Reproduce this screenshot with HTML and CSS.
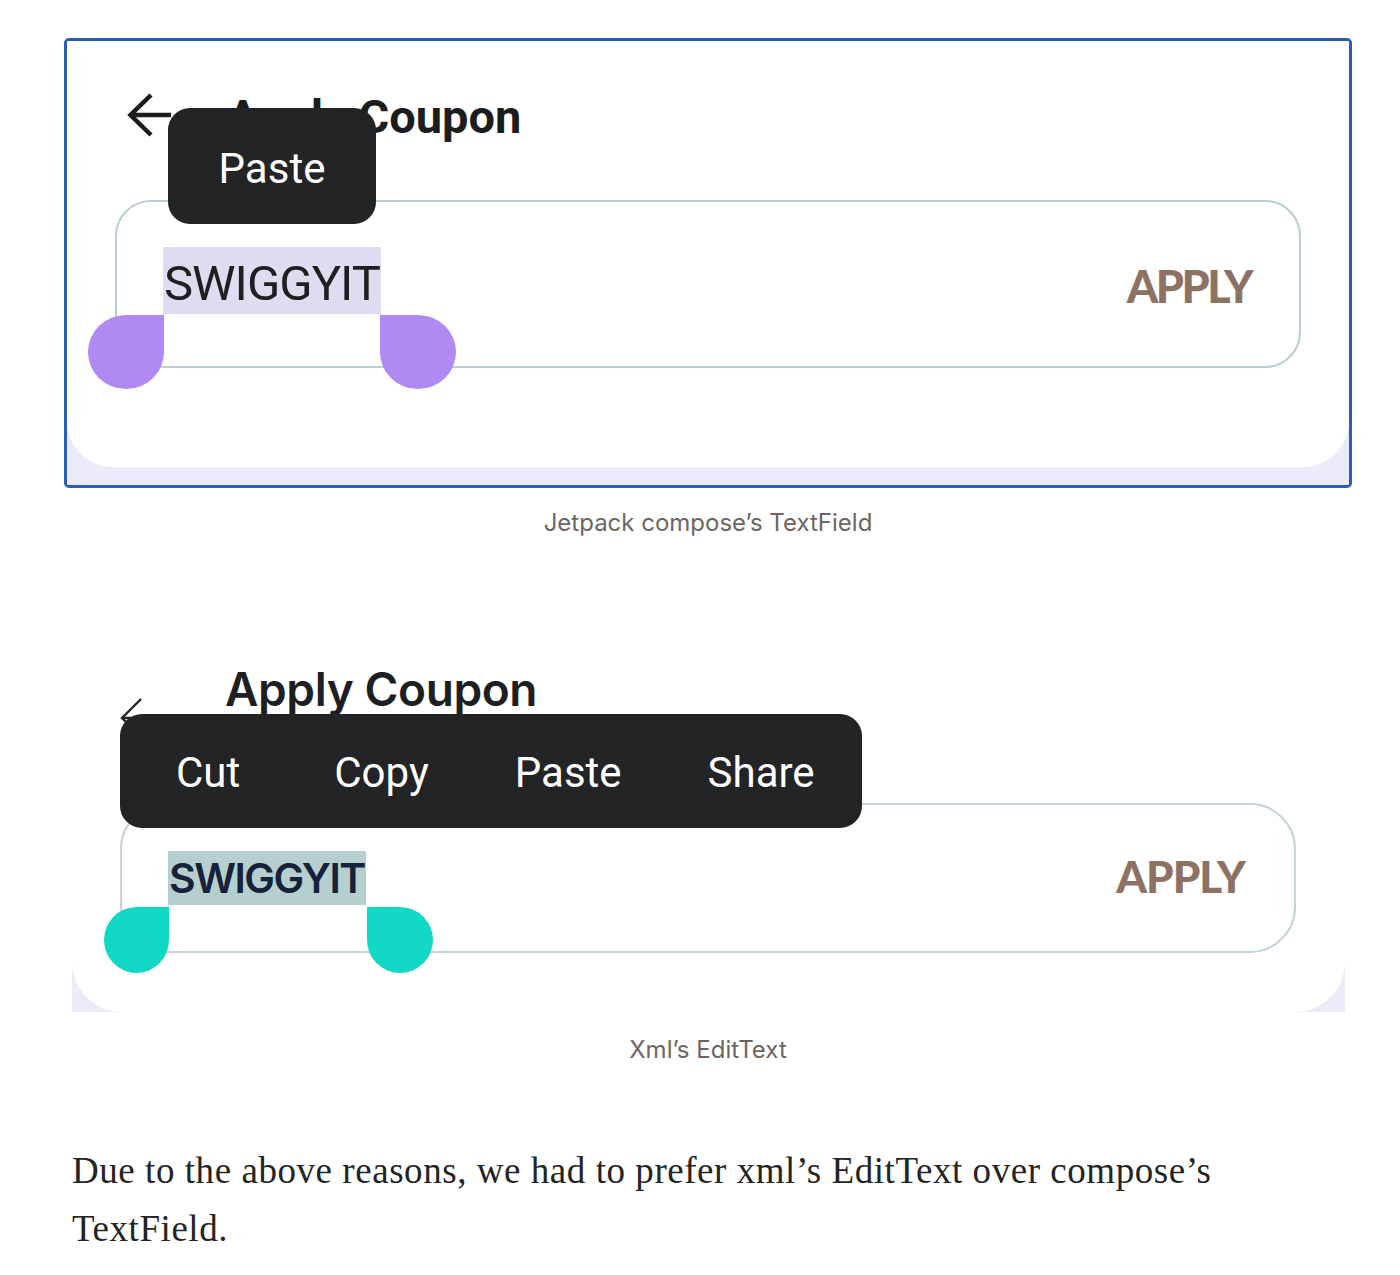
FILE: index.html
```html
<!DOCTYPE html>
<html lang="en">
<head>
<meta charset="utf-8">
<title>Apply Coupon – TextField vs EditText</title>
<link rel="stylesheet" href="styles.css">
</head>
<body>
<main class="article">
  <figure class="figure">
    <div class="frame">
      <div class="shot shot-one">
        <div class="card card-one">
          <div class="topbar topbar-one">
            <svg class="back back-one" width="46" height="46" viewBox="0 0 46 46" aria-hidden="true">
              <path d="M45 23 H5 M25 3 L4.5 23 L25 43" fill="none" stroke="#1b1b1b" stroke-width="4.5"/>
            </svg>
            <h2 class="title title-one">Apply Coupon</h2>
          </div>
          <div class="field field-one">
            <span class="sel sel-one">SWIGGYIT</span>
            <span class="apply apply-one">APPLY</span>
            <span class="handle handle-left purple hl-one"></span>
            <span class="handle handle-right purple hr-one"></span>
          </div>
          <div class="popup popup-one"><span class="pop-item">Paste</span></div>
        </div>
      </div>
    </div>
    <figcaption class="caption">Jetpack compose’s TextField</figcaption>
  </figure>

  <figure class="figure figure-two">
    <div class="shot shot-two">
      <div class="card card-two">
        <div class="topbar topbar-two">
          <svg class="back back-two" width="40" height="44" viewBox="0 0 40 44" aria-hidden="true">
            <path d="M23 2 L4 21 L23 40 M4 21 H38" fill="none" stroke="#2a2220" stroke-width="2.4"/>
          </svg>
          <h2 class="title title-two">Apply Coupon</h2>
        </div>
        <div class="field field-two">
          <span class="sel sel-two">SWIGGYIT</span>
          <span class="apply apply-two">APPLY</span>
          <span class="handle handle-left teal hl-two"></span>
          <span class="handle handle-right teal hr-two"></span>
        </div>
        <div class="popup popup-two">
          <span class="pop-item">Cut</span>
          <span class="pop-item">Copy</span>
          <span class="pop-item">Paste</span>
          <span class="pop-item">Share</span>
        </div>
      </div>
    </div>
    <figcaption class="caption caption-two">Xml’s EditText</figcaption>
  </figure>

  <p class="body-text">Due to the above reasons, we had to prefer xml’s EditText over compose’s TextField.</p>
</main>
</body>
</html>
```

FILE: styles.css
```css
* { box-sizing: border-box; }

html, body {
  margin: 0;
  padding: 0;
  background: #ffffff;
}

.article {
  width: 1288px;
  margin-left: 64px;
  padding-top: 38px;
}

.figure {
  margin: 0;
}

/* ---------- figure 1 ---------- */
.frame {
  height: 450px;
  border: 3px solid #2a5db4;
  border-radius: 5px;
  overflow: hidden;
}

.shot {
  background: #ebeaf8;
}

.shot-one {
  height: 444px;
}

.card {
  position: relative;
  background: #ffffff;
}

.card-one {
  height: 426px;
  padding: 52px 48px 0 48px;
  border-radius: 0 0 46px 46px;
}

.topbar {
  display: flex;
}

.topbar-one {
  height: 44px;
  align-items: center;
}

.back-one {
  margin-left: 11px;
  flex: none;
}

.title {
  margin: 0;
  white-space: nowrap;
}

.title-one {
  margin-left: 55px;
  font-family: Roboto, "Liberation Sans", sans-serif;
  font-weight: 700;
  font-size: 47px;
  line-height: 44px;
  letter-spacing: 0;
  color: #1c1c1c;
  padding-top: 3px;
}

.field {
  position: relative;
  display: flex;
  justify-content: space-between;
  align-items: flex-start;
  border-style: solid;
  background: #ffffff;
}

.field-one {
  margin-top: 63px;
  height: 168px;
  border-width: 2px;
  border-color: #b9ced3;
  border-radius: 36px;
  padding: 45px 48px 0 46px;
}

.sel {
  display: inline-block;
  white-space: nowrap;
}

.sel-one {
  background: #dfdcf1;
  height: 67px;
  padding: 6px 1px 0 1px;
  line-height: 61px;
  font-family: Roboto, "Liberation Sans", sans-serif;
  font-size: 49px;
  font-weight: 400;
  letter-spacing: -1px;
  color: #1f1f1f;
}

.apply {
  font-family: Lato, "Liberation Sans", sans-serif;
  font-weight: 900;
  color: #8d7264;
  white-space: nowrap;
}

.apply-one {
  margin-top: 14px;
  font-size: 45px;
  line-height: 50px;
  letter-spacing: -2.5px;
}

.handle {
  position: absolute;
  display: block;
}

.purple { background: #b08af2; }
.teal { background: #10d8c5; }

.handle-left {
  border-radius: 50% 0 50% 50%;
}

.handle-right {
  border-radius: 0 50% 50% 50%;
}

.hl-one {
  left: -29px;
  top: 113px;
  width: 76px;
  height: 74px;
}

.hr-one {
  left: 263px;
  top: 113px;
  width: 76px;
  height: 74px;
}

.popup {
  position: absolute;
  background: #232426;
  border-radius: 22px;
  display: flex;
  align-items: center;
  font-family: Roboto, "Liberation Sans", sans-serif;
  font-size: 42px;
  color: #ffffff;
  z-index: 2;
}

.popup-one {
  left: 101px;
  top: 67px;
  width: 208px;
  height: 116px;
  padding-top: 5px;
  justify-content: center;
}

.pop-item {
  line-height: 50px;
  white-space: nowrap;
}

.caption {
  margin-top: 21px;
  text-align: center;
  font-family: Inter, "Liberation Sans", sans-serif;
  font-size: 24px;
  line-height: 28px;
  color: #6e6561;
}

/* ---------- figure 2 ---------- */
.figure-two {
  margin-top: 83px;
}

.shot-two {
  margin: 0 7px 0 8px;
  height: 392px;
}

.card-two {
  height: 392px;
  padding: 39px 49px 0 48px;
  border-radius: 0 0 50px 50px;
}

.topbar-two {
  height: 60px;
  align-items: flex-start;
}

.back-two {
  flex: none;
  margin-left: -2px;
  margin-top: 38px;
}

.title-two {
  margin-left: 67px;
  font-family: Inter, "Liberation Sans", sans-serif;
  font-weight: 600;
  font-size: 46px;
  line-height: 60px;
  color: #1e1f22;
  letter-spacing: -0.4px;
}

.field-two {
  margin-top: 84px;
  height: 150px;
  border-width: 2px;
  border-color: #c4d3da;
  border-radius: 46px;
  padding: 46px 49px 0 46px;
}

.sel-two {
  background: #b5cfce;
  height: 54px;
  line-height: 54px;
  padding: 0 1px;
  font-family: Inter, "Liberation Sans", sans-serif;
  font-size: 41px;
  font-weight: 600;
  color: #17223a;
  letter-spacing: -1.5px;
}

.apply-two {
  margin-top: 0;
  font-size: 44px;
  line-height: 50px;
  letter-spacing: -1px;
}

.hl-two {
  left: -18px;
  top: 102px;
  width: 65px;
  height: 66px;
}

.hr-two {
  left: 245px;
  top: 102px;
  width: 66px;
  height: 66px;
}

.popup-two {
  left: 48px;
  top: 94px;
  width: 742px;
  height: 114px;
  padding-left: 56px;
  padding-top: 4px;
  gap: 86px;
  font-size: 42px;
}

.popup-two .pop-item:first-child {
  margin-right: 8px;
}

.caption-two {
  margin-top: 24px;
}

/* ---------- paragraph ---------- */
.body-text {
  margin: 78px 0 0 8px;
  font-family: "Liberation Serif", "Times New Roman", serif;
  font-size: 37px;
  line-height: 58px;
  letter-spacing: 0.55px;
  color: #242424;
  width: 1220px;
}
```
